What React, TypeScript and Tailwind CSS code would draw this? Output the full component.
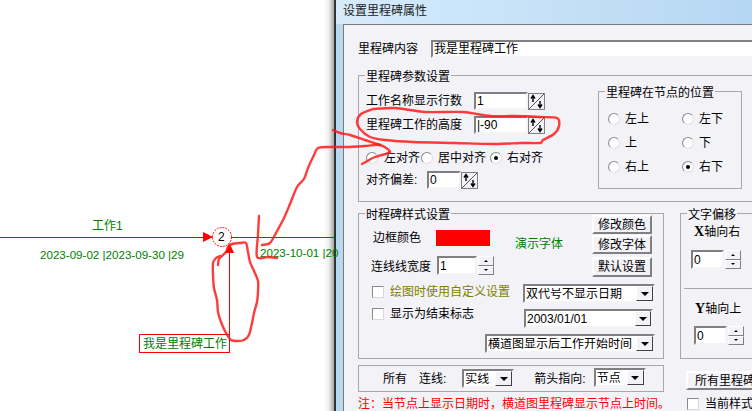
import React from "react";

const cjk = { fontFamily: '"Liberation Sans","Noto Sans CJK SC",sans-serif' };

function smooth(p: number[][]) {
  let d = `M${p[0][0]} ${p[0][1]}`;
  for (let i = 0; i < p.length - 1; i++) {
    const a = p[Math.max(i - 1, 0)], b = p[i], c = p[i + 1], e = p[Math.min(i + 2, p.length - 1)];
    const t = 0.14;
    d += `C${b[0] + (c[0] - a[0]) * t} ${b[1] + (c[1] - a[1]) * t} ${c[0] - (e[0] - b[0]) * t} ${c[1] - (e[1] - b[1]) * t} ${c[0]} ${c[1]}`;
  }
  return d;
}

const strokes: number[][][] = [
  [[218,265],[219,259],[222,256],[226,252],[228,247],[232,244],[240,243],[246,243],[248,252],[250,262],[254,271],[258,281],[258,292],[257,302],[254,313],[252,323],[249,335],[244,340],[238,341],[231,340],[226,333],[221,322],[218,312],[217,300],[214,288],[213,275],[213,263],[216,258],[220,256]],
  [[259,216],[258,235],[257,257],[268,257],[277,258]],
  [[262,245],[270,243],[276,233],[284,218],[290,204],[297,187],[304,179],[308,168],[314,155],[318,148],[330,147],[345,147],[365,146],[380,145],[390,152],[375,157],[362,164]],
  [[333,130],[340,133],[350,135],[365,140],[380,145]],
  [[373,109],[395,108],[425,112],[463,112],[490,116],[515,116],[540,117],[557,118],[559,126],[554,134],[543,140],[540,143],[520,143],[497,144],[455,143],[413,142],[385,140],[370,137],[360,129],[357,122],[361,114],[373,109]],
];

function Sunken({ w, h, children, className = "" }: { w: number; h: number; children?: React.ReactNode; className?: string }) {
  return (
    <div
      style={{ width: w, height: h }}
      className={"flex items-center bg-white border-2 border-t-[#808080] border-l-[#808080] border-r-[#f4f4f4] border-b-[#f4f4f4] pl-[1px] text-[12px] leading-none overflow-hidden shrink-0 " + className}
    >
      {children}
    </div>
  );
}

function DiagSpin() {
  return (
    <svg width="17" height="17" viewBox="0 0 17 17" className="shrink-0">
      <rect x="0.5" y="0.5" width="16" height="16" fill="#f3f2f7" stroke="#808080" />
      <path d="M1 16 L16 1" stroke="#555" strokeWidth="1" />
      <path d="M5 9V4M3 5.5L5 2.5L7 5.5" stroke="#000" strokeWidth="1.4" fill="none" />
      <path d="M12 8V13M10 11.5L12 14.5L14 11.5" stroke="#000" strokeWidth="1.4" fill="none" />
    </svg>
  );
}

function Spin({ w, value }: { w: number; value: string }) {
  return (
    <div className="flex items-center">
      <Sunken w={w} h={18}>{value}</Sunken>
      <DiagSpin />
    </div>
  );
}

function UpDown({ w, h, value }: { w: number; h: number; value: string }) {
  const half = "flex-1 bg-[#f3f2f7] border border-t-white border-l-white border-r-[#808080] border-b-[#808080] flex items-center justify-center";
  return (
    <div className="flex">
      <Sunken w={w} h={h}>{value}</Sunken>
      <div style={{ height: h }} className="w-[16px] ml-[1px] flex flex-col">
        <div className={half}><div className="w-0 h-0 border-x-[2px] border-x-transparent border-b-[2px] border-b-black" /></div>
        <div className={half}><div className="w-0 h-0 border-x-[2px] border-x-transparent border-t-[2px] border-t-black" /></div>
      </div>
    </div>
  );
}

function Radio({ on = false, label, gap = 5 }: { on?: boolean; label: string; gap?: number }) {
  return (
    <div className="flex items-center" style={{ gap }}>
      <div className="w-[12px] h-[12px] rounded-full bg-white border border-t-[#8a8a8a] border-l-[#8a8a8a] border-r-[#e0e0e0] border-b-[#e0e0e0] flex items-center justify-center shrink-0">
        {on && <div className="w-[4px] h-[4px] rounded-full bg-black" />}
      </div>
      <span>{label}</span>
    </div>
  );
}

function Check({ label, color, className = "" }: { label: string; color?: string; className?: string }) {
  return (
    <div className={"flex items-center gap-[6px] " + className}>
      <div className="w-[12px] h-[12px] bg-white border border-t-[#8a8a8a] border-l-[#8a8a8a] border-r-[#d8d8d8] border-b-[#d8d8d8] shrink-0" />
      <span style={{ color }}>{label}</span>
    </div>
  );
}

function Combo({ w, h = 19, label, btn = 17 }: { w: number; h?: number; label: string; btn?: number }) {
  return (
    <div style={{ width: w, height: h }} className="flex items-center bg-white border-2 border-t-[#808080] border-l-[#808080] border-r-[#f4f4f4] border-b-[#f4f4f4] shrink-0">
      <span className="flex-1 pl-[1px] whitespace-nowrap overflow-hidden leading-none">{label}</span>
      <div style={{ width: btn }} className="h-full bg-[#f3f2f7] border border-t-white border-l-white border-r-[#404040] border-b-[#404040] flex items-center justify-center shrink-0">
        <div className="w-0 h-0 border-x-[4px] border-x-transparent border-t-[4px] border-t-black" />
      </div>
    </div>
  );
}

function Btn({ h, w, label, className = "" }: { h: number; w?: number; label: string; className?: string }) {
  return (
    <div style={{ height: h, width: w }} className={"flex items-center justify-center bg-[#f3f2f7] border-2 border-t-white border-l-white border-r-[#808080] border-b-[#808080] whitespace-nowrap overflow-hidden shrink-0 " + className}>
      {label}
    </div>
  );
}

function Legend({ children, left = 6 }: { children: React.ReactNode; left?: number }) {
  return (
    <span style={{ left }} className="absolute top-[-6px] bg-[#f3f2f7] px-[1px] leading-[14px] whitespace-nowrap">
      {children}
    </span>
  );
}

function Canvas() {
  return (
    <div className="relative w-[324px] shrink-0 bg-white text-[#008000]">
      <div className="absolute left-0 right-[-10px] top-[237px] h-[1px] bg-[#e8000b]" />
      <svg className="absolute left-0 top-0" width="334" height="411">
        <path d="M203 232L213 237L203 242Z" fill="#f00" />
        <circle cx="222" cy="237" r="9.5" fill="#fff" stroke="#f00" strokeDasharray="2 1" />
        <path d="M229.5 249V335" stroke="#f00" />
        <path d="M225 253L229.5 243L234 253Z" fill="#f00" />
      </svg>
      <span className="absolute left-[218px] top-[230px] text-[12px] leading-[14px] text-black">2</span>
      <span className="absolute left-[92px] top-[219px] text-[12px] leading-[14px] whitespace-nowrap">工作1</span>
      <span className="absolute left-[40px] top-[248px] text-[11.6px] leading-[14px] whitespace-nowrap">2023-09-02 |2023-09-30 |29</span>
      <span className="absolute left-[260px] top-[246px] text-[11.6px] leading-[14px] whitespace-nowrap">2023-10-01 |20</span>
      <div className="absolute left-[139px] top-[334px] w-[91px] h-[19px] bg-white border border-[#f00] flex items-center pl-[3px] text-[12px] leading-none whitespace-nowrap">我是里程碑工作</div>
    </div>
  );
}

function Dialog() {
  return (
    <div className="flex-1 flex flex-col bg-[#b9d9f3] min-w-0">
      <div className="h-[24px] pl-[7px] pt-[3px] text-[12px] leading-[16px] text-[#222] shrink-0 bg-gradient-to-r from-[#d6ebfb] via-[#c6e1f7] to-[#b5d6f2]">设置里程碑属性</div>
      <div className="flex-1 pl-[4px] border-l-[3px] border-l-[#b9d9f3] min-h-0">
        <div className="h-full border border-[#7a7a7a] border-r-0 border-b-0 bg-[#f3f2f7] pl-[14px] overflow-hidden text-[12px] text-black">
          <div className="flex items-center h-[18px] mt-[15px] w-[500px]">
            <span className="w-[73px] shrink-0">里程碑内容</span>
            <Sunken w={330} h={18}>我是里程碑工作</Sunken>
          </div>

          <div className="relative w-[500px] h-[127px] mt-[17px] border border-[#a8a8a8] pl-[7px] pt-[15px] flex">
            <Legend>里程碑参数设置</Legend>
            <div className="flex flex-col w-[232px] shrink-0 pt-[1px]">
              <div className="flex items-center h-[18px]">
                <span className="w-[108px] shrink-0">工作名称显示行数</span>
                <Spin w={54} value="1" />
              </div>
              <div className="flex items-center h-[18px] mt-[6px]">
                <span className="w-[108px] shrink-0">里程碑工作的高度</span>
                <Spin w={54} value="|-90" />
              </div>
              <div className="flex items-center h-[14px] mt-[17px] whitespace-nowrap">
                <div className="w-[55px]"><Radio label="左对齐" gap={6} /></div>
                <div className="w-[69px]"><Radio label="居中对齐" gap={5} /></div>
                <Radio on label="右对齐" gap={5} />
              </div>
              <div className="flex items-center h-[18px] mt-[6px]">
                <span className="w-[61px] shrink-0">对齐偏差:</span>
                <Spin w={34} value="0" />
              </div>
            </div>
            <div className="relative w-[144px] h-[98px] border border-[#a8a8a8] pl-[9px] pt-[20px] grid grid-cols-[74px_60px] grid-rows-[14px_14px_14px] gap-y-[10px]">
              <Legend>里程碑在节点的位置</Legend>
              <Radio label="左上" />
              <Radio label="左下" />
              <Radio label="上" />
              <Radio label="下" />
              <Radio label="右上" />
              <Radio on label="右下" />
            </div>
          </div>

          <div className="flex mt-[11px] w-[500px]">
            <div className="relative w-[306px] h-[146px] border border-[#a8a8a8] shrink-0 flex">
              <Legend>时程碑样式设置</Legend>
              <div className="w-[233px] shrink-0 flex flex-col">
                <div className="flex items-center h-[17px] mt-[15px] pl-[14px]">
                  <span className="w-[63px] shrink-0">边框颜色</span>
                  <div className="w-[54px] h-[16px] bg-[#f00] shrink-0" />
                  <span className="ml-[25px] mt-[12px] text-[#008000] whitespace-nowrap">演示字体</span>
                </div>
                <div className="flex items-center mt-[9px] pl-[12px]">
                  <span className="w-[66px] shrink-0 mt-[3px]">连线线宽度</span>
                  <UpDown w={40} h={19} value="1" />
                </div>
              </div>
              <div className="flex flex-col pt-[1px]">
                <Btn h={19} w={60} label="修改颜色" />
                <Btn h={19} w={60} label="修改字体" className="mt-[1px]" />
                <Btn h={20} w={60} label="默认设置" className="mt-[3px]" />
              </div>
              <div className="absolute left-[13px] right-[8px] top-[70px] flex flex-col">
                <div className="flex items-center justify-between h-[19px]">
                  <Check label="绘图时使用自定义设置" color="#808000" className="mb-[4px]" />
                  <Combo w={132} label="双代号不显示日期" />
                </div>
                <div className="flex items-center justify-between h-[19px] mt-[6px] pr-[2px]">
                  <Check label="显示为结束标志" className="mb-[10px]" />
                  <Combo w={129} label="2003/01/01" btn={16} />
                </div>
                <div className="flex justify-end mt-[6px]">
                  <Combo w={170} label="横道图显示后工作开始时间" />
                </div>
              </div>
            </div>

            <div className="relative w-[90px] h-[146px] ml-[16px] border border-[#a8a8a8] shrink-0">
              <Legend>文字偏移</Legend>
              <div className="pl-[13px] pt-[10px] leading-[16px]"><b className="font-['Liberation_Serif'] text-[14px]">X</b>轴向右</div>
              <div className="pl-[10px] pt-[10px]"><UpDown w={33} h={19} value="0" /></div>
              <div className="h-[1px] bg-[#a8a8a8] mt-[19px] ml-[3px]" />
              <div className="pl-[14px] pt-[12px] leading-[16px]"><b className="font-['Liberation_Serif'] text-[14px]">Y</b>轴向上</div>
              <div className="pl-[13px] pt-[9px]"><UpDown w={33} h={19} value="0" /></div>
            </div>
          </div>

          <div className="flex mt-[6px] w-[500px]">
            <div className="w-[306px] h-[27px] border border-[#a8a8a8] flex items-center shrink-0 whitespace-nowrap">
              <span className="ml-[24px]">所有</span>
              <span className="ml-[12px]">连线:</span>
              <span className="ml-[16px]"><Combo w={52} h={19} label="实线" /></span>
              <span className="ml-[20px]">箭头指向:</span>
              <span className="ml-[8px] -mt-[2px]"><Combo w={52} h={19} label="节点" /></span>
            </div>
            <div className="ml-[22px] pt-[6px]">
              <Btn h={19} w={90} label="所有里程碑设置" className="justify-start pl-[7px]" />
            </div>
          </div>

          <div className="flex items-center w-[500px] h-[12px] mt-[6px] whitespace-nowrap">
            <span className="text-[#f00] w-[329px] shrink-0">{"注\uFF1A当节点上显示日期时\uFF0C横道图里程碑显示节点上时间\u3002"}</span>
            <Check label="当前样式设置" />
          </div>
        </div>
      </div>
    </div>
  );
}

export default function App() {
  return (
    <div style={cjk} className="relative w-[752px] h-[411px] overflow-hidden bg-white flex">
      <Canvas />
      <div className="w-[10px] shrink-0 bg-gradient-to-r from-white via-[#ececec] to-[#a8a8a8]" />
      <div className="w-[2px] shrink-0 bg-[#333]" />
      <Dialog />
      <svg className="absolute left-0 top-0 pointer-events-none" width="752" height="411" fill="none" stroke="#ff1a1a" strokeOpacity="0.85" strokeWidth="2.4" strokeLinejoin="round" strokeLinecap="round">
        {strokes.map((s, i) => <path key={i} d={smooth(s)} />)}
      </svg>
    </div>
  );
}
